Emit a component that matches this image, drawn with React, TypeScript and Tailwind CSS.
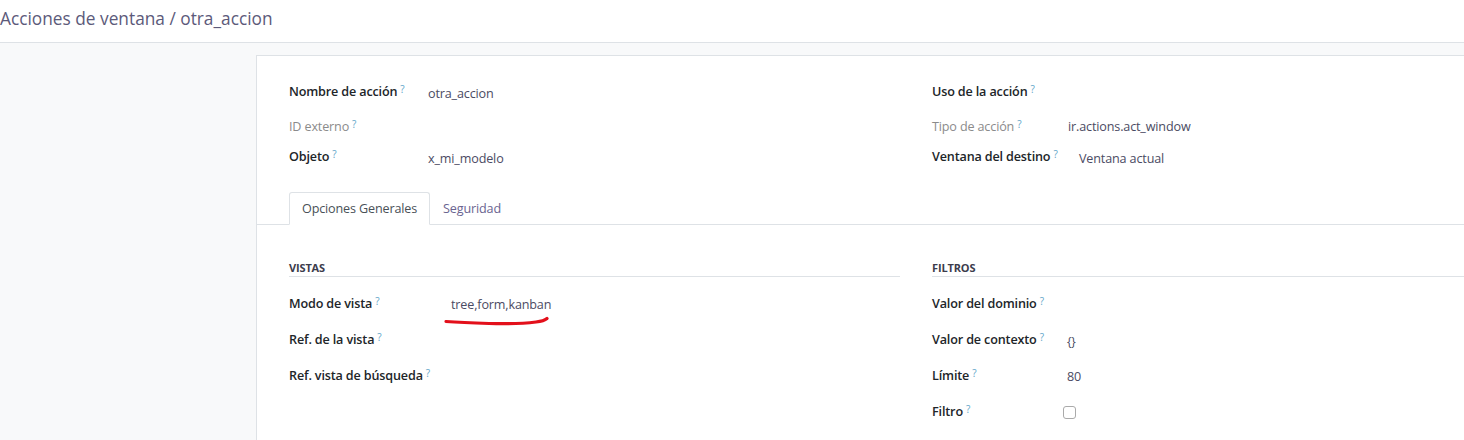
import React from "react"

const font = { fontFamily: '"Open Sans", "Noto Sans", Arial, sans-serif' }

function Help() {
  return <sup className="ml-[3px] text-[10px] font-normal text-[#63a6c9] relative -top-[3px]">?</sup>
}

function Field({ label, value, muted, labelW, h, valueClass = "" }: { label: string; value?: React.ReactNode; muted?: boolean; labelW: string; h: string; valueClass?: string }) {
  return (
    <div className={`flex items-center ${h}`}>
      <div className={`${labelW} shrink-0 ${muted ? "text-[#8b8b8b] font-normal" : "text-[#212529] font-semibold"}`}>
        {label}
        <Help />
      </div>
      <div className={`text-[#4b4b63] ${valueClass}`}>{value}</div>
    </div>
  )
}

export default function App() {
  return (
    <div className="w-full h-[440px] overflow-hidden bg-[#f8f9fa] text-[12.6px] tracking-[-0.15px]" style={font}>
      {/* breadcrumb */}
      <div className="h-[43px] bg-white border-b border-[#dee2e6] flex items-center">
        <span className="text-[17.3px] tracking-normal text-[#5c5a7a] leading-none -mt-[4px]">Acciones de ventana / otra_accion</span>
      </div>

      <div className="pl-[256px] pt-[12px]">
        <div className="w-[1260px] h-[400px] bg-white border-l border-t border-[#dee2e6]">
          {/* header fields */}
          <div className="pt-[18px] px-[32px] flex">
            <div className="w-[643px]">
              <Field label="Nombre de acción" value="otra_accion" labelW="w-[139px]" h="h-[36px]" valueClass="mt-[4px]" />
              <Field label="ID externo" muted labelW="w-[139px]" h="h-[34px]" />
              <Field label="Objeto" value="x_mi_modelo" labelW="w-[139px]" h="h-[27px]" valueClass="mt-[3px]" />
            </div>
            <div className="flex-1">
              <Field label="Uso de la acción" labelW="w-[136px]" h="h-[36px]" />
              <Field label="Tipo de acción" muted value="ir.actions.act_window" labelW="w-[136px]" h="h-[34px]" />
              <Field label="Ventana del destino" value="Ventana actual" labelW="w-[136px]" h="h-[27px]" valueClass="ml-[11px] mt-[3px]" />
            </div>
          </div>

          {/* tabs */}
          <div className="mt-[21px] border-b border-[#dee2e6] pl-[32px] flex h-[33px]">
            <div className="h-[33px] px-[12px] pt-[1px] flex items-center bg-white border border-[#dee2e6] border-b-white rounded-t-[3px] text-[#495057]">
              Opciones Generales
            </div>
            <div className="h-[33px] px-[12px] pt-[1px] flex items-center border border-transparent text-[#6a6490]">
              Seguridad
            </div>
          </div>

          {/* tab content */}
          <div className="pt-[35px] px-[32px] flex">
            <div className="w-[611px] mr-[32px]">
              <div className="h-[17px] border-b border-[#dee2e6] text-[11px] font-bold uppercase text-[#3c3c4c] leading-[16px]">Vistas</div>
              <div className="mt-[9px]">
                <div className="relative">
                  <Field label="Modo de vista" value="tree,form,kanban" labelW="w-[162px]" h="h-[36px]" valueClass="mt-[2px]" />
                  <svg className="absolute left-[155px] top-[27px]" width="110" height="14" viewBox="0 0 110 14">
                    <path d="M2 8.5 C 15 9.5, 28 10, 45 10.5 C 62 11, 80 10.5, 92 9 C 98 8.3, 101 7.2, 103 5.5" fill="none" stroke="#e3101b" strokeWidth="3.2" strokeLinecap="round" />
                  </svg>
                </div>
                <Field label="Ref. de la vista" labelW="w-[162px]" h="h-[36px]" />
                <Field label="Ref. vista de búsqueda" labelW="w-[162px]" h="h-[36px]" />
              </div>
            </div>
            <div className="flex-1">
              <div className="h-[17px] border-b border-[#dee2e6] text-[11px] font-bold uppercase text-[#3c3c4c] leading-[16px]">Filtros</div>
              <div className="mt-[9px]">
                <Field label="Valor del dominio" labelW="w-[135px]" h="h-[36px]" />
                <Field label="Valor de contexto" value="{}" labelW="w-[135px]" h="h-[36px]" valueClass="mt-[3px] text-[12px]" />
                <Field label="Límite" value="80" labelW="w-[135px]" h="h-[36px]" valueClass="mt-[2px]" />
                <div className="flex items-center h-[36px]">
                  <div className="w-[131px] shrink-0 text-[#212529] font-semibold">
                    Filtro
                    <Help />
                  </div>
                  <div className="w-[13px] h-[13px] border border-[#aaaaaa] rounded-[3px] bg-white" />
                </div>
              </div>
            </div>
          </div>
        </div>
      </div>
    </div>
  )
}
